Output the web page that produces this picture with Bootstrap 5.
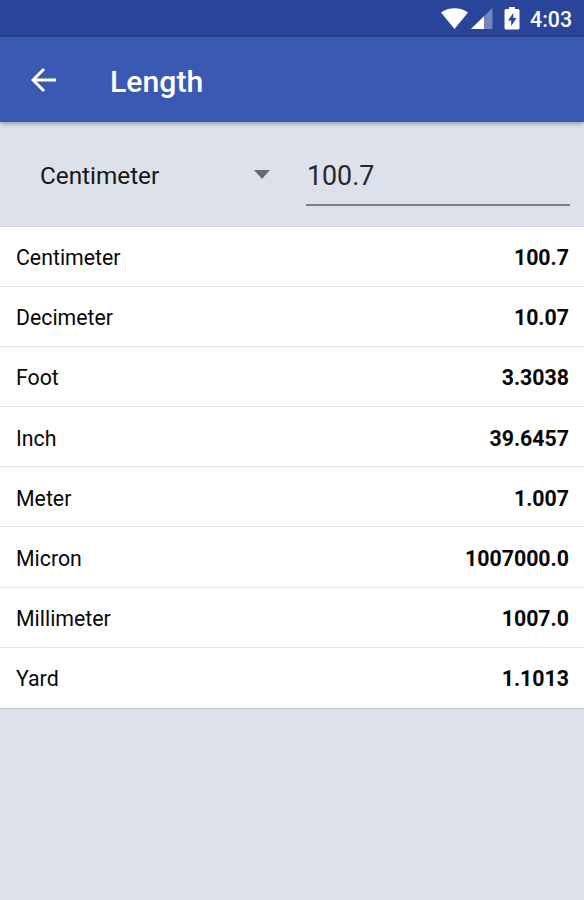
<!DOCTYPE html>
<html lang="en">
<head>
<meta charset="utf-8">
<meta name="viewport" content="width=device-width, initial-scale=1">
<title>Length</title>
<link rel="stylesheet" href="https://cdn.jsdelivr.net/npm/bootstrap@5.3.0/dist/css/bootstrap.min.css">
<style>
body { font-family: Roboto, sans-serif; background: #dde1e9; color: #111; min-height: 900px; line-height: 1; overflow: hidden; }
.status-bar { height: 37px; background: #29459a; padding-right: 12px; }
.clock { font-size: 21.3px; font-weight: 500; line-height: 37px; margin-left: 9px; padding-top: 2px; }
.app-bar { height: 85px; background: #3a59b2; padding: 0 0 0 30px; box-shadow: 0 1px 5px rgba(0,0,0,.4); }
.app-title { font-size: 30.2px; font-weight: 500; line-height: 34px; margin-left: 53px; padding-top: 5px; }
.converter { height: 104px; padding: 31px 14px 0 40px; }
.unit-select { width: 266px; height: 42px; padding-right: 36px; font-size: 24.3px; color: #15171a; }
.amount { height: 53px; font-size: 26.800px; border-bottom: 2px solid #7b7f86; color: #26292d; padding: 0 0 5px 1px; }
.results { border-top: 1px solid #d0d4da; border-bottom: 1px solid #c5cace; }
.result-row { height: 60.1px; padding: 2.700px 15px 0 16px; border: 0; border-bottom: 1px solid #e3e4e6; background: #fff; color: #080808; font-size: 21.3px; }
.result-row:last-child { border-bottom: 0; padding-top: 1px; }
.result-value { font-weight: 700; }
</style>
<script src="https://cdn.jsdelivr.net/npm/bootstrap@5.3.0/dist/js/bootstrap.bundle.min.js"></script>
</head>
<body>
<div class="status-bar d-flex align-items-center justify-content-end text-white">
  <svg width="80" height="24" viewBox="0 0 80 24" fill="#fff">
    <path d="M0 5.500C7-.2 20-.2 27 5.500L13.500 22Z"/>
    <path d="M51.500 1V22H30Z" opacity=".35"/>
    <path d="M43 9.300V22H30Z"/>
    <path fill-rule="evenodd" d="M68 0h6v2h3q1.500 0 1.500 1.500v17.500q0 1.500-1.500 1.500h-12q-1.500 0-1.500-1.500v-17.500q0-1.500 1.500-1.500h3ZM72.300 6l-5.300 7.500h3.200v5.500l5.300-8h-3.200Z"/>
  </svg>
  <span class="clock">4:03</span>
</div>
<header class="app-bar d-flex align-items-center text-white position-relative">
  <svg width="27" height="26" viewBox="0 0 27 26" fill="none" stroke="#fff" stroke-width="2.900"><path d="M14 2L3 13L14 24M3 13H26"/></svg>
  <h1 class="app-title mb-0">Length</h1>
</header>
<section class="converter d-flex">
  <div class="unit-select d-flex align-items-center justify-content-between flex-shrink-0">
    <span class="pt-1">Centimeter</span>
    <svg width="16" height="9" viewBox="0 0 16 9" fill="#686c71"><path d="M0 0H16L8 9Z"/></svg>
  </div>
  <div class="amount flex-grow-1 d-flex align-items-center">100.7</div>
</section>
<ul class="results list-group list-group-flush">
  <li class="result-row list-group-item d-flex align-items-center justify-content-between"><span>Centimeter</span><span class="result-value">100.7</span></li>
  <li class="result-row list-group-item d-flex align-items-center justify-content-between"><span>Decimeter</span><span class="result-value">10.07</span></li>
  <li class="result-row list-group-item d-flex align-items-center justify-content-between"><span>Foot</span><span class="result-value">3.3038</span></li>
  <li class="result-row list-group-item d-flex align-items-center justify-content-between"><span>Inch</span><span class="result-value">39.6457</span></li>
  <li class="result-row list-group-item d-flex align-items-center justify-content-between"><span>Meter</span><span class="result-value">1.007</span></li>
  <li class="result-row list-group-item d-flex align-items-center justify-content-between"><span>Micron</span><span class="result-value">1007000.0</span></li>
  <li class="result-row list-group-item d-flex align-items-center justify-content-between"><span>Millimeter</span><span class="result-value">1007.0</span></li>
  <li class="result-row list-group-item d-flex align-items-center justify-content-between"><span>Yard</span><span class="result-value">1.1013</span></li>
</ul>
</body>
</html>
